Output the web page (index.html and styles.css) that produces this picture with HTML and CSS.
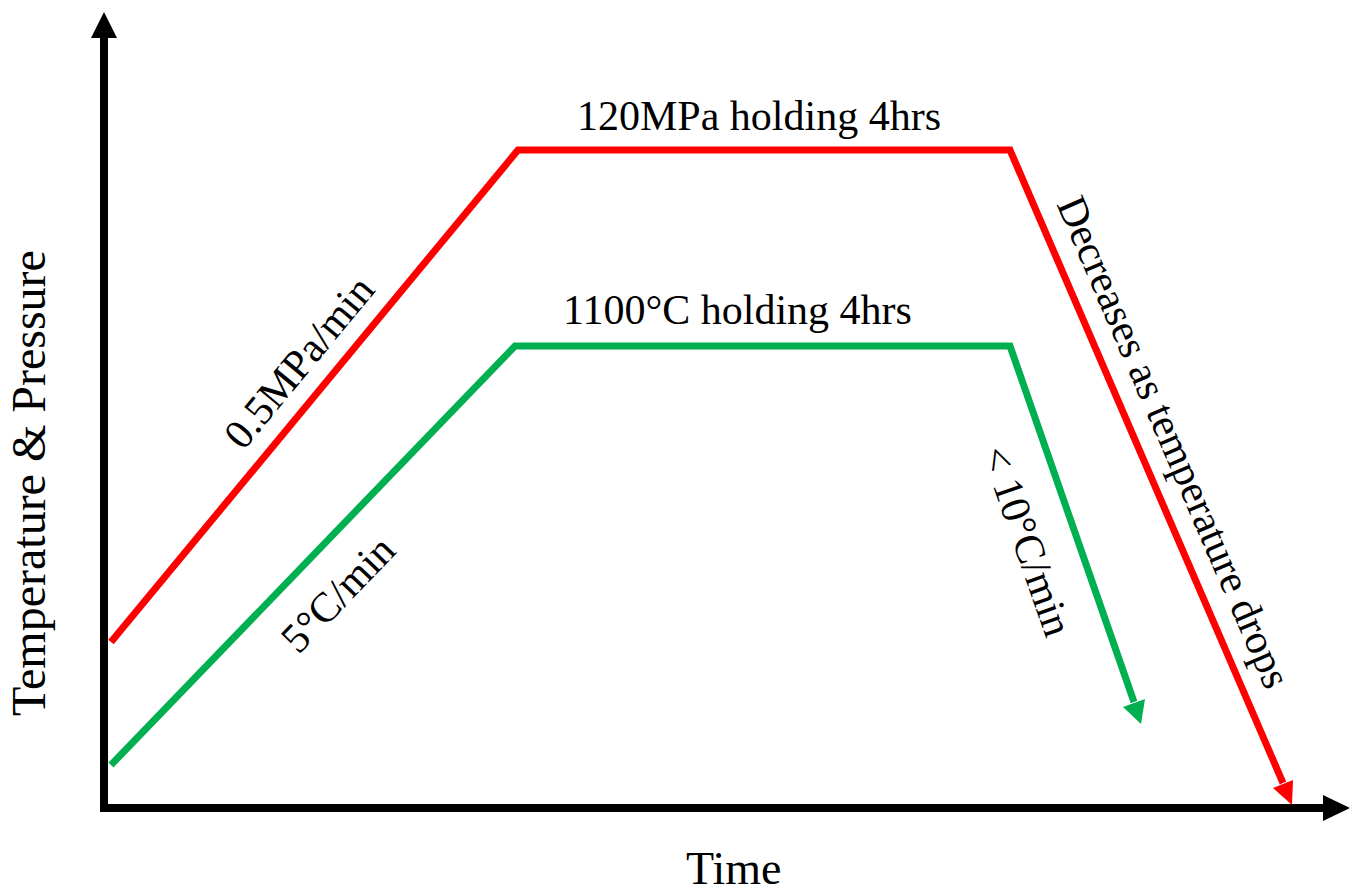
FILE: index.html
```html
<!DOCTYPE html>
<html lang="en">
<head>
<meta charset="utf-8">
<title>Temperature &amp; Pressure profile</title>
<link rel="stylesheet" href="styles.css">
</head>
<body>
<div class="chart">
  <svg class="canvas" width="1361" height="896" viewBox="0 0 1361 896" xmlns="http://www.w3.org/2000/svg">
    <polyline class="axis" points="104,36 104,808 1326,808"/>
    <polygon class="axis-head" points="104,12 91,38 117,38"/>
    <polygon class="axis-head" points="1350,808 1323,795 1323,821"/>

    <polyline class="red" points="111,642 518,150 1010,150 1283,783"/>
    <polygon class="red-head" points="1292,805 1293,780 1273,788"/>

    <polyline class="green" points="111,765 515,346 1010,346 1134,702"/>
    <polygon class="green-head" points="1141,724 1145,699 1123,707"/>
  </svg>

  <span class="label top-red">120MPa holding 4hrs</span>
  <span class="label top-green">1100°C holding 4hrs</span>
  <span class="label rot ramp-red">0.5MPa/min</span>
  <span class="label rot ramp-green">5°C/min</span>
  <span class="label rot cool-green">&lt; 10°C/min</span>
  <span class="label rot cool-red">Decreases as temperature drops</span>
  <span class="label axis-title y-title">Temperature &amp; Pressure</span>
  <span class="label axis-title x-title">Time</span>
</div>
</body>
</html>
```

FILE: styles.css
```css
html, body {
  margin: 0;
  padding: 0;
  background: #ffffff;
}

.chart {
  position: relative;
  width: 1361px;
  height: 896px;
  overflow: hidden;
  background: #ffffff;
}

.canvas {
  position: absolute;
  left: 0;
  top: 0;
  display: block;
}

.axis {
  fill: none;
  stroke: #000000;
  stroke-width: 8;
  stroke-linejoin: miter;
}

.axis-head {
  fill: #000000;
}

.red {
  fill: none;
  stroke: #ff0000;
  stroke-width: 7;
  stroke-linejoin: miter;
}

.red-head {
  fill: #ff0000;
}

.green {
  fill: none;
  stroke: #00b050;
  stroke-width: 7;
  stroke-linejoin: miter;
}

.green-head {
  fill: #00b050;
}

.label {
  position: absolute;
  font-family: "Liberation Serif", "Times New Roman", serif;
  font-size: 42px;
  line-height: 1;
  white-space: nowrap;
  color: #000000;
}

.top-red {
  left: 577px;
  top: 95px;
}

.top-green {
  left: 563px;
  top: 289px;
}

.rot {
  transform-origin: 50% 50%;
}

.ramp-red {
  left: 299px;
  top: 362px;
  transform: translate(-50%, -50%) rotate(-50.4deg);
}

.ramp-green {
  left: 338px;
  top: 594px;
  transform: translate(-50%, -50%) rotate(-46.1deg);
}

.cool-green {
  left: 1027px;
  top: 541px;
  transform: translate(-50%, -50%) rotate(70.8deg);
}

.cool-red {
  left: 1174px;
  top: 442px;
  transform: translate(-50%, -50%) rotate(66.7deg);
}

.axis-title {
  font-size: 48px;
}

.y-title {
  left: 29px;
  top: 483px;
  transform: translate(-50%, -50%) rotate(-90deg);
}

.x-title {
  font-size: 46px;
  left: 686px;
  top: 846px;
}
```
